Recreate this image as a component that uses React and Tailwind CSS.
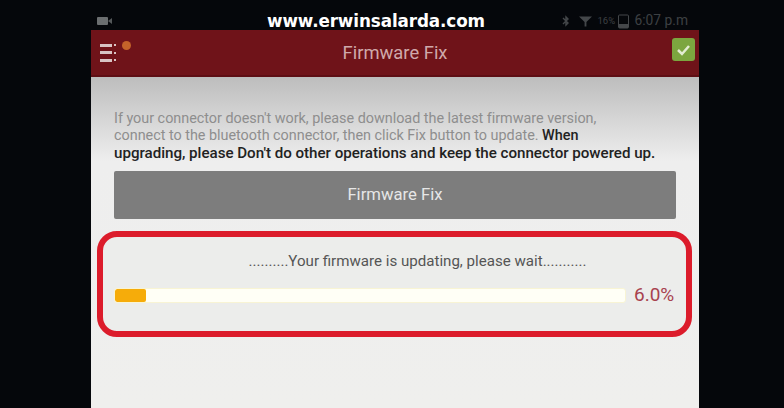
export default function App() {
  return (
    <div className="w-[784px] h-[408px] overflow-hidden bg-[#05070b] flex flex-col items-start pl-[91px] font-['Roboto',sans-serif]">
      <div className="w-[608px] h-[30px] shrink-0 flex items-center pl-[6px] pr-[11px] pt-[12px]">
        <svg width="16" height="10" viewBox="0 0 16 10" className="shrink-0">
          <rect x="0" y="1" width="11" height="8" rx="1" fill="#6b6e70" />
          <path d="M11 5 L15 2 V8 Z" fill="#55585a" />
        </svg>
        <span className="ml-[154px] text-[16.8px] leading-[18px] font-bold text-white whitespace-nowrap font-['DejaVu_Sans',sans-serif] tracking-[-0.1px]">
          www.erwinsalarda.com
        </span>
        <div className="ml-auto flex items-center text-[#3d4043]">
          <svg width="8" height="12" viewBox="0 0 8 12" className="mr-[9px]">
            <path d="M1 3 L6 8 L4 10 V2 L6 4 L1 9" fill="none" stroke="#44474a" strokeWidth="1.4" />
          </svg>
          <svg width="13" height="13" viewBox="0 0 14 13" className="mr-[5px]">
            <path d="M0 1 H14 L8 7 V12 H6 V7 Z" fill="#44474a" />
          </svg>
          <span className="text-[9.5px] leading-none w-[21px] whitespace-nowrap">16%</span>
          <svg width="11" height="15" viewBox="0 0 11 15" className="mr-[5px]">
            <rect x="0.5" y="1" width="10" height="13" rx="1" fill="none" stroke="#44474a" />
            <rect x="1" y="10" width="9" height="4" fill="#44474a" />
          </svg>
          <span className="text-[13.8px] leading-none whitespace-nowrap">6:07 p.m</span>
        </div>
      </div>
      <div className="w-[608px] h-[378px] shrink-0 flex flex-col">
        <div className="h-[47px] shrink-0 bg-[#6f1319] border-b-2 border-b-[#5e0e14] flex items-center pl-[9px] pr-[4px]">
          <div className="relative w-[22px] h-[18px] flex flex-col justify-between">
            {[0, 1, 2].map((i) => (
              <div key={i} className="flex items-center gap-[2px]">
                <div className="w-[12px] h-[3px] bg-[#d9c3c3]" />
                <div className="w-[2px] h-[2px] bg-[#d9c3c3]" />
              </div>
            ))}
            <div className="absolute left-[22px] top-[-3px] w-[9px] h-[9px] rounded-full bg-[#c4632a]" />
          </div>
          <span className="flex-1 text-center text-[18.4px] text-[#cfa9ab] relative left-[-2px]">Firmware Fix</span>
          <div className="w-[23px] h-[23px] rounded-[3px] bg-[#7ca63f] flex items-center justify-center relative top-[-3px]">
            <svg width="15" height="12" viewBox="0 0 15 12">
              <path d="M2 6 L6 10 L13 2" fill="none" stroke="#e3ecd2" strokeWidth="2.5" />
            </svg>
          </div>
        </div>
        <div className="flex-1 bg-[linear-gradient(#bdbdbd_0px,#eeeeee_84px,#efefed_100%)] px-[6px]">
          <div className="px-[17px] pt-[33px]">
            <p className="text-[14.4px] leading-[17.4px] text-[#8e8e8e] h-[53px] whitespace-nowrap tracking-[-0.02px]">
              If your connector doesn't work, please download the latest firmware version,<br />
              connect to the bluetooth connector, then click Fix button to update. <span className="text-[#222222] font-medium">When</span><br />
              <span className="text-[#222222] font-medium text-[15.15px]">upgrading, please Don't do other operations and keep the connector powered up.</span>
            </p>
            <div className="mt-[8px] h-[48px] w-[562px] rounded-[2px] bg-[#7d7d7d] flex items-center justify-center text-[16.7px] text-[#e6e6e6]">
              Firmware Fix
            </div>
          </div>
          <div className="mt-[12px] h-[106px] w-[595px] border-[6px] border-[#dc1c2b] rounded-[20px] pt-[14px] pl-[11px] bg-[#ecedeb]">
            <div className="w-[543px] text-center text-[15.1px] leading-[20px] text-[#555555] whitespace-nowrap relative left-[32px]">
              ..........Your firmware is updating, please wait...........
            </div>
            <div className="mt-[14px] flex items-center">
              <div className="w-[512px] h-[15px] rounded-[3px] bg-[#fffff6] border border-[#f8f4d4] overflow-hidden">
                <div className="w-[31px] h-full rounded-[2px] bg-[#f6ac0a]" />
              </div>
              <span className="ml-[8px] text-[19px] leading-[20px] text-[#a8424e] whitespace-nowrap">6.0%</span>
            </div>
          </div>
        </div>
      </div>
    </div>
  );
}
